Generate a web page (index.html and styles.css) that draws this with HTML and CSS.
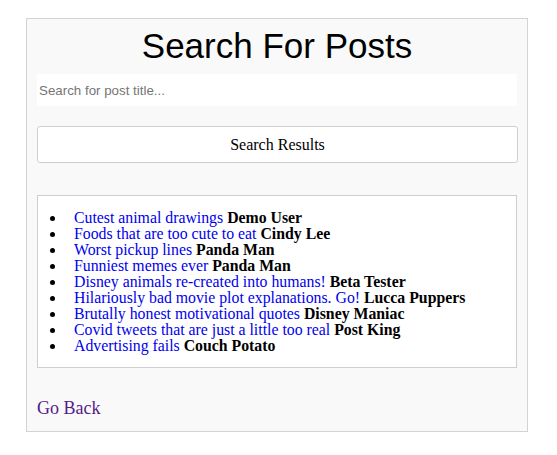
FILE: index.html
```html
<!DOCTYPE html>
<html>
<head>
<meta charset="utf-8">
<link rel="stylesheet" href="styles.css">
</head>
<body>
<div class="card">
  <h1 class="title">Search For Posts</h1>
  <input class="search" type="text" placeholder="Search for post title...">
  <button class="results-btn">Search Results</button>
  <div class="results">
    <ul class="list">
      <li><a href="#" class="post">Cutest animal drawings</a> <b>Demo User</b></li>
      <li><a href="#" class="post">Foods that are too cute to eat</a> <b>Cindy Lee</b></li>
      <li><a href="#" class="post">Worst pickup lines</a> <b>Panda Man</b></li>
      <li><a href="#" class="post">Funniest memes ever</a> <b>Panda Man</b></li>
      <li><a href="#" class="post">Disney animals re-created into humans!</a> <b>Beta Tester</b></li>
      <li><a href="#" class="post">Hilariously bad movie plot explanations. Go!</a> <b>Lucca Puppers</b></li>
      <li><a href="#" class="post">Brutally honest motivational quotes</a> <b>Disney Maniac</b></li>
      <li><a href="#" class="post">Covid tweets that are just a little too real</a> <b>Post King</b></li>
      <li><a href="#" class="post">Advertising fails</a> <b>Couch Potato</b></li>
    </ul>
  </div>
  <a href="#" class="back">Go Back</a>
</div>
</body>
</html>
```
FILE: styles.css
```css
html, body {
  margin: 0;
  padding: 0;
  background: #ffffff;
}
body {
  font-family: "Liberation Serif", "Times New Roman", serif;
}
.card {
  margin: 18px 0 0 26px;
  width: 480px;
  padding: 0 10px 12px 10px;
  border: 1px solid #d3d3d3;
  background: #f9f9f9;
}
.title {
  margin: 7px 0 0 0;
  font-family: "Liberation Sans", Arial, sans-serif;
  font-weight: normal;
  font-size: 35px;
  line-height: 40px;
  text-align: center;
  color: #000;
}
.search {
  display: block;
  box-sizing: border-box;
  width: 480px;
  height: 32px;
  margin: 8px 0 0 0;
  padding: 0 2px;
  border: none;
  background: #ffffff;
  font-family: "Liberation Sans", Arial, sans-serif;
  font-size: 13.333px;
  outline: none;
}
.search::placeholder {
  color: #757575;
}
.results-btn {
  display: block;
  box-sizing: border-box;
  width: 481px;
  height: 37px;
  margin: 20px 0 0 0;
  padding: 0;
  border: 1px solid #cfcfcf;
  border-radius: 3px;
  background: #ffffff;
  font-family: "Liberation Serif", "Times New Roman", serif;
  font-size: 16px;
  color: #000;
}
.results {
  margin-top: 32px;
  border: 1px solid #cfcfcf;
  background: #ffffff;
  padding: 14px 0 13px 0;
}
.list {
  margin: 0;
  padding-left: 28px;
  font-size: 15.8px;
  line-height: 16px;
}
.list li {
  padding-left: 8px;
}
.post {
  color: #0000ee;
  text-decoration: none;
}
.list b {
  color: #000;
}
.back {
  display: inline-block;
  margin-top: 30px;
  font-size: 18px;
  color: #551a8b;
  text-decoration: none;
}
```
